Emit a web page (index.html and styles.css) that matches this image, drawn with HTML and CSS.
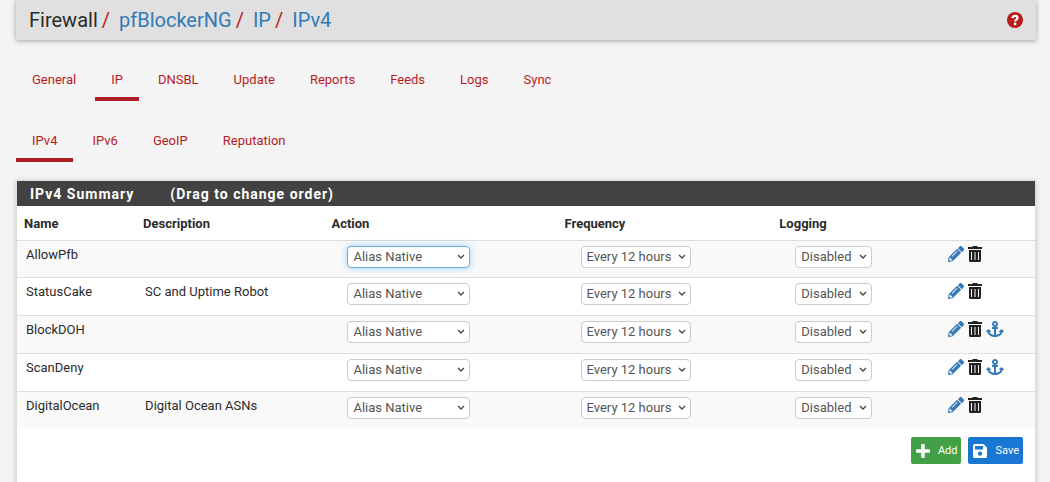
FILE: index.html
```html
<!DOCTYPE html>
<html lang="en">
<head>
<meta charset="utf-8">
<title>Firewall: pfBlockerNG: IP: IPv4</title>
<link rel="stylesheet" href="styles.css">
</head>
<body>
<svg class="sprite" aria-hidden="true">
  <symbol id="pencil" viewBox="0 0 512 512"><path d="M497.9 142.1l-46.1 46.1c-4.7 4.7-12.3 4.7-17 0l-111-111c-4.700-4.700-4.700-12.300 0-17l46.100-46.100c18.700-18.700 49.100-18.700 67.900 0l60.100 60.100c18.800 18.700 18.800 49.100 0 67.900zM284.200 99.800L21.600 362.400.4 483.900c-2.900 16.400 11.400 30.600 27.800 27.800l121.500-21.300 262.600-262.600c4.700-4.700 4.700-12.300 0-17l-111-111c-4.800-4.700-12.400-4.700-17.100 0zM124.100 339.900c-5.500-5.500-5.500-14.300 0-19.800l154-154c5.500-5.500 14.300-5.500 19.800 0s5.500 14.300 0 19.800l-154 154c-5.500 5.500-14.300 5.500-19.800 0zM88 424h48v36.300l-64.500 11.300-31.100-31.100L51.700 376H88v48z"/></symbol>
  <symbol id="trash" viewBox="0 0 14 16"><path fill-rule="evenodd" d="M0 1h4L5 0h4l1 1h4v2H0zM1 4h12v10.500Q13 16 11.500 16h-9Q1 16 1 14.500zM3 6v8h1V6zM6.500 6v8h1V6zM10 6v8h1V6z"/></symbol>
  <symbol id="anchor" viewBox="0 0 576 512"><path d="M12.971 352h32.394C67.172 454.735 181.944 512 288 512c106.229 0 220.853-57.380 242.635-160h32.394c10.691 0 16.045-12.926 8.485-20.485l-67.029-67.029c-4.686-4.686-12.284-4.686-16.971 0l-67.029 67.029c-7.560 7.560-2.206 20.485 8.485 20.485h35.146c-20.290 54.317-84.963 86.588-144.117 94.015V256h52c6.627 0 12-5.373 12-12v-40c0-6.627-5.373-12-12-12h-52v-5.470c37.281-13.226 63.995-48.725 64-90.500C384.005 43.772 341.605.738 289.370.010 235.723-.739 192 42.525 192 96c0 41.798 26.716 77.320 64 90.530V192h-52c-6.627 0-12 5.373-12 12v40c0 6.627 5.373 12 12 12h52v190.015c-58.936-7.399-123.820-39.679-144.117-94.015h35.146c10.691 0 16.045-12.926 8.485-20.485l-67.029-67.029c-4.686-4.686-12.284-4.686-16.971 0L4.485 331.515C-3.074 339.074 2.280 352 12.971 352zM288 64c17.645 0 32 14.355 32 32s-14.355 32-32 32-32-14.355-32-32 14.355-32 32-32z"/></symbol>
</svg>
<header class="breadcrumb-bar">
  <nav class="breadcrumb" aria-label="Breadcrumb">
    <span class="crumb">Firewall</span>
    <span class="slash">/</span><a class="crumb" href="#">pfBlockerNG</a>
    <span class="slash">/</span><a class="crumb" href="#">IP</a>
    <span class="slash">/</span><a class="crumb" href="#">IPv4</a>
  </nav>
  <a class="help" href="#" aria-label="Help"><svg viewBox="0 0 16 16" width="16" height="16"><circle cx="8" cy="8" r="8" fill="#b71c1c"/><path d="M5.500 6.200Q5.800 3.900 8.100 3.900 10.500 3.900 10.500 6 10.500 7.100 9.300 7.700 8.100 8.300 8.100 9.500" fill="none" stroke="#fff" stroke-width="2.200"/><circle cx="8.100" cy="11.900" r="1.400" fill="#fff"/></svg></a>
</header>
<main>
  <nav class="tabs" aria-label="Sections">
    <a href="#">General</a><a class="active" href="#">IP</a><a href="#">DNSBL</a><a href="#">Update</a><a href="#">Reports</a><a href="#">Feeds</a><a href="#">Logs</a><a href="#">Sync</a>
  </nav>
  <nav class="tabs" aria-label="IP pages">
    <a class="active" href="#">IPv4</a><a href="#">IPv6</a><a href="#">GeoIP</a><a href="#">Reputation</a>
  </nav>
  <section class="panel">
    <h2><span>IPv4 Summary</span><span>(Drag to change order)</span></h2>
    <table>
      <colgroup><col class="c-name"><col class="c-desc"><col class="c-action"><col class="c-freq"><col class="c-log"><col></colgroup>
      <thead><tr><th>Name</th><th>Description</th><th>Action</th><th>Frequency</th><th>Logging</th><th></th></tr></thead>
      <tbody>
        <tr><td>AllowPfb</td><td></td>
          <td><select class="w-action focused" aria-label="Action for AllowPfb"><option>Alias Native</option></select></td>
          <td><select class="w-freq" aria-label="Frequency for AllowPfb"><option>Every 12 hours</option></select></td>
          <td><select class="w-log" aria-label="Logging for AllowPfb"><option>Disabled</option></select></td>
          <td><div class="actions"><a href="#" aria-label="Edit"><svg width="16" height="16"><use href="#pencil"/></svg></a><a class="dark" href="#" aria-label="Delete"><svg width="14" height="16"><use href="#trash"/></svg></a></div></td></tr>
        <tr><td>StatusCake</td><td>SC and Uptime Robot</td>
          <td><select class="w-action" aria-label="Action for StatusCake"><option>Alias Native</option></select></td>
          <td><select class="w-freq" aria-label="Frequency for StatusCake"><option>Every 12 hours</option></select></td>
          <td><select class="w-log" aria-label="Logging for StatusCake"><option>Disabled</option></select></td>
          <td><div class="actions"><a href="#" aria-label="Edit"><svg width="16" height="16"><use href="#pencil"/></svg></a><a class="dark" href="#" aria-label="Delete"><svg width="14" height="16"><use href="#trash"/></svg></a></div></td></tr>
        <tr><td>BlockDOH</td><td></td>
          <td><select class="w-action" aria-label="Action for BlockDOH"><option>Alias Native</option></select></td>
          <td><select class="w-freq" aria-label="Frequency for BlockDOH"><option>Every 12 hours</option></select></td>
          <td><select class="w-log" aria-label="Logging for BlockDOH"><option>Disabled</option></select></td>
          <td><div class="actions"><a href="#" aria-label="Edit"><svg width="16" height="16"><use href="#pencil"/></svg></a><a class="dark" href="#" aria-label="Delete"><svg width="14" height="16"><use href="#trash"/></svg></a><a href="#" aria-label="Move"><svg width="18" height="16"><use href="#anchor"/></svg></a></div></td></tr>
        <tr><td>ScanDeny</td><td></td>
          <td><select class="w-action" aria-label="Action for ScanDeny"><option>Alias Native</option></select></td>
          <td><select class="w-freq" aria-label="Frequency for ScanDeny"><option>Every 12 hours</option></select></td>
          <td><select class="w-log" aria-label="Logging for ScanDeny"><option>Disabled</option></select></td>
          <td><div class="actions"><a href="#" aria-label="Edit"><svg width="16" height="16"><use href="#pencil"/></svg></a><a class="dark" href="#" aria-label="Delete"><svg width="14" height="16"><use href="#trash"/></svg></a><a href="#" aria-label="Move"><svg width="18" height="16"><use href="#anchor"/></svg></a></div></td></tr>
        <tr><td>DigitalOcean</td><td>Digital Ocean ASNs</td>
          <td><select class="w-action" aria-label="Action for DigitalOcean"><option>Alias Native</option></select></td>
          <td><select class="w-freq" aria-label="Frequency for DigitalOcean"><option>Every 12 hours</option></select></td>
          <td><select class="w-log" aria-label="Logging for DigitalOcean"><option>Disabled</option></select></td>
          <td><div class="actions"><a href="#" aria-label="Edit"><svg width="16" height="16"><use href="#pencil"/></svg></a><a class="dark" href="#" aria-label="Delete"><svg width="14" height="16"><use href="#trash"/></svg></a></div></td></tr>
      </tbody>
    </table>
    <div class="buttons">
      <button class="btn add" type="button"><svg viewBox="0 0 14 14" width="14" height="14"><path d="M5.200 1Q5.200 0 6.200 0h1.600Q8.800 0 8.800 1v4.200H13q1 0 1 1v1.600q0 1-1 1H8.800V13q0 1-1 1H6.200q-1 0-1-1V8.800H1q-1 0-1-1V6.200q0-1 1-1h4.200z"/></svg>Add</button>
      <button class="btn save" type="button"><svg viewBox="0 0 14 14" width="14" height="14"><path fill-rule="evenodd" d="M1.500 0h9L14 3.500v9q0 1.500-1.500 1.500h-11Q0 14 0 12.500v-11Q0 0 1.500 0zM2 2v3.500h8V2zM7 7.500a2.100 2.100 0 1 0 .01 0z"/></svg>Save</button>
    </div>
  </section>
</main>
</body>
</html>
```
FILE: styles.css
```css
* { box-sizing: border-box; }
html { overflow: hidden; }
body {
  margin: 0;
  padding: 0 14px 0 16px;
  background: #f4f4f4;
  color: #2b2b2b;
  font: 13px/18px Roboto, "Liberation Sans", sans-serif;
}
a { text-decoration: none; color: #337ab7; }
svg { display: block; fill: currentColor; }
.sprite { display: none; }

.breadcrumb-bar {
  display: flex;
  align-items: center;
  justify-content: space-between;
  height: 40px;
  padding: 0 13px;
  background: #e0e0e0;
  box-shadow: 0 1px 5px rgba(0, 0, 0, .35);
}
.breadcrumb { display: flex; gap: 4px; font-size: 20px; line-height: 24px; }
.slash { color: #b71c1c; margin-right: 5px; }

.tabs { display: flex; gap: 3px; height: 43px; margin-top: 18px; }
.tabs a {
  padding: 13px 16px 8px;
  border-bottom: 4px solid transparent;
  color: #b71c1c;
}
.tabs .active { border-color: #ab1f24; }

.panel {
  margin-top: 18px;
  min-height: 320px;
  border: 1px solid #ddd;
  background: #fff;
  box-shadow: 0 1px 5px rgba(0, 0, 0, .2);
}
.panel h2 {
  display: flex;
  gap: 36px;
  margin: 0;
  padding: 4px 13px 3px;
  background: #424242;
  color: #fff;
  font-size: 14px;
  line-height: 18px;
  letter-spacing: 1px;
}
table { width: 100%; border-collapse: separate; border-spacing: 0; table-layout: fixed; }
.c-name { width: 11.7%; }
.c-desc { width: 18.5%; }
.c-action { width: 22.9%; }
.c-freq { width: 21.1%; }
.c-log { width: 16.6%; }
th { height: 34px; padding: 1px 7px 0; text-align: left; font-weight: 700; }
td { height: 38px; padding: 5px 8px 0 9px; border-top: 1px solid #ddd; vertical-align: top; }
td:last-child { padding-left: 7px; }
tbody tr:nth-child(odd) { background: #f9f9f9; }
tbody tr:first-child td,
tbody tr:last-child td { height: 37px; }

select {
  display: block;
  height: 22px;
  margin-left: 14px;
  padding: 0 5px;
  border: 1px solid #ccc;
  border-radius: 4px;
  background: #fff url("data:image/svg+xml,%3Csvg xmlns='http://www.w3.org/2000/svg' width='8' height='6'%3E%3Cpath d='M1 1l3 3 3-3' fill='none' stroke='%23444' stroke-width='1.300'/%3E%3C/svg%3E") no-repeat right 4px center;
  color: #555;
  font: inherit;
  appearance: none;
}
.w-action { width: 123px; }
.w-freq { width: 110px; }
.w-log { width: 77px; }
.focused { border-color: #66afe9; box-shadow: 0 0 7px rgba(102, 175, 233, .6); }

.actions { display: flex; gap: 4px; }
.actions .dark { color: #212121; }

.buttons { display: flex; justify-content: flex-end; gap: 7px; padding: 9px 12px; }
.btn {
  display: flex;
  align-items: center;
  gap: 8px;
  height: 27px;
  padding: 0 4px 0 5px;
  border: 0;
  border-radius: 2px;
  color: #fff;
  font: 11px/16px Roboto, "Liberation Sans", sans-serif;
}
.add { background: #43a047; }
.save { background: #1976d2; }
```
